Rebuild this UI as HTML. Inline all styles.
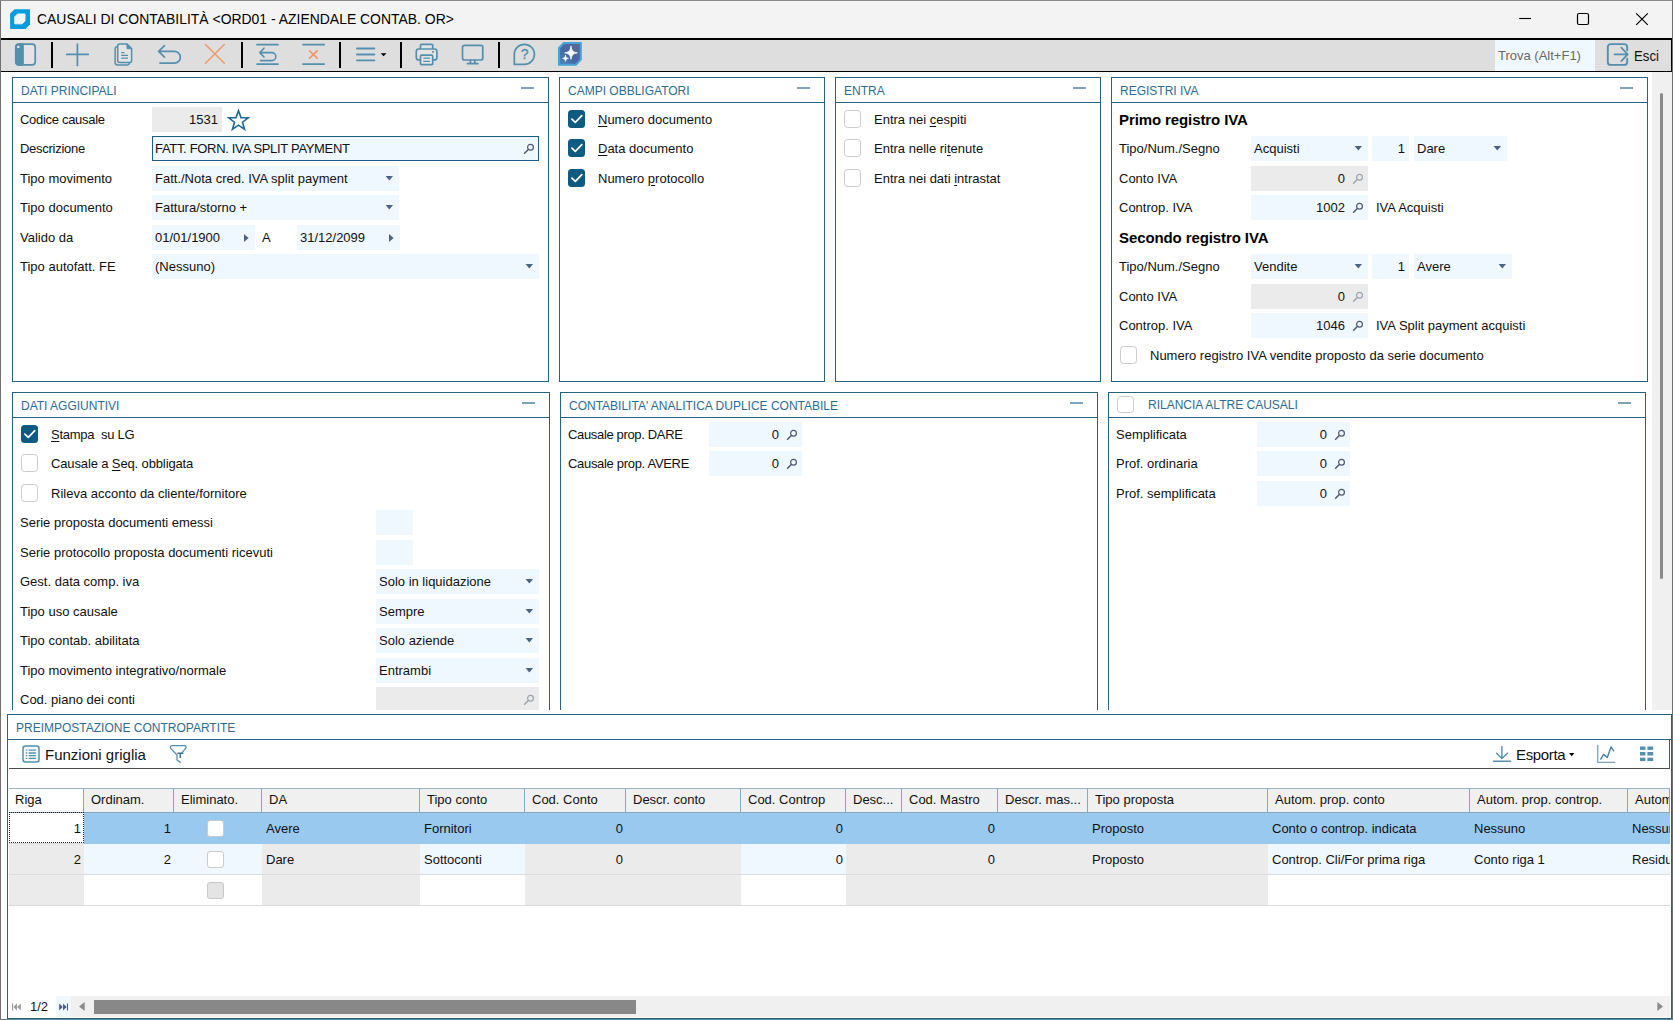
<!DOCTYPE html>
<html lang="it"><head><meta charset="utf-8"><title>Causali di contabilità</title>
<style>
html,body{margin:0;padding:0}
body{width:1673px;height:1020px;overflow:hidden;background:#fff;position:relative;font-family:"Liberation Sans",sans-serif;font-size:13px;color:#101010}
div,span,svg{position:absolute;box-sizing:border-box}
.t{white-space:nowrap;line-height:25px;height:25px}
.pn{border:1px solid #27627f;background:#fff}
.ph{left:0;right:0;top:0;height:25px;border-bottom:1px solid #27627f}
.pt{color:#2c6c92;font-size:12px;line-height:26px;top:0;left:8px;white-space:nowrap}
.mn{width:13px;height:2px;background:#7fa4b9;top:9px}
.f{background:#f0f8ff;height:25px;line-height:25px;white-space:nowrap;overflow:hidden}
.f.d{background:#ebebeb}
.f .v{left:3px;top:0;line-height:25px}
.f .r{top:0;line-height:25px}
.cb{width:17.5px;height:17.5px;border-radius:3.5px;margin:-0.3px 0 0 -0.2px}
.cb.on{background:#0f5a80}
.cb.g{width:17px;height:17px;border-radius:3px;margin:0}
.cb.off{background:#fff;border:1.7px solid #cbcbcb}
.cb.gr{background:#e4e4e4;border:1px solid #c9c9c9}
u{text-decoration-thickness:1px;text-underline-offset:2px}
.b{font-weight:bold;font-size:15px;letter-spacing:-0.1px;white-space:nowrap;line-height:25px;height:25px;color:#000}
.sep{width:2px;background:#000;top:42px;height:26px}
.gh{top:0;height:24px;line-height:21px;white-space:nowrap;overflow:hidden;background:#f0f0f0;border-right:1px solid #86a8bd;padding-left:7px}
.gc{height:31px;line-height:32px;white-space:nowrap;overflow:hidden;border-bottom:1px solid #dcdcdc}
</style></head>
<body>

<div style="left:0;top:0;width:1673px;height:38px;background:#f3f3f3"></div>
<svg style="left:10px;top:9px" width="20" height="20" viewBox="0 0 20 20"><path d="M4.5 0.2 H20 V15.5 L15.5 20 H0.1 V4.5 Z" fill="#069de0"/><path d="M7.6 5 H15 V12 L12.2 14.8 H4.8 V7.8 Z" fill="#f0f8fb" stroke="#f0f8fb" stroke-width="1" stroke-linejoin="round"/></svg>
<div style="left:37px;top:8px;font-size:15px;transform-origin:0 0;transform:scaleX(0.929);line-height:22px;white-space:nowrap;color:#000" id="ttl">CAUSALI DI CONTABILITÀ &lt;ORD01 - AZIENDALE CONTAB. OR&gt;</div>
<svg style="left:1510px;top:8px" width="150" height="22" viewBox="0 0 150 22"><path d="M9.2 10.5 H21" stroke="#000" stroke-width="1.1"/><rect x="67.5" y="5.5" width="11" height="11" rx="1.5" fill="none" stroke="#000" stroke-width="1.2"/><path d="M126.2 5.3 L137.8 16.9 M137.8 5.3 L126.2 16.9" stroke="#000" stroke-width="1.2"/></svg>
<div style="left:0;top:38px;width:1673px;height:34px;background:#000"></div>
<div style="left:1px;top:40px;width:1670px;height:31px;background:#dedede"></div>
<div class="sep" style="left:51px"></div>
<div class="sep" style="left:241px"></div>
<div class="sep" style="left:339px"></div>
<div class="sep" style="left:400px"></div>
<div class="sep" style="left:498px"></div>
<svg style="left:0;top:40px" width="600" height="31" viewBox="0 0 600 31" fill="none" stroke-linecap="round" stroke-linejoin="round">
<defs><linearGradient id="aig" x1="0" y1="1" x2="1" y2="0"><stop offset="0" stop-color="#4a86ba"/><stop offset="0.45" stop-color="#4668a2"/><stop offset="1" stop-color="#5a6a98"/></linearGradient></defs>
<g stroke="#5490ae" stroke-width="1.7">
<rect x="15.8" y="4.1" width="19.4" height="20.8" rx="3.2" fill="#e4e4e4"/><path d="M23 4.1 V24.9 H19 a3.2 3.2 0 0 1 -3.2 -3.2 V7.3 a3.2 3.2 0 0 1 3.2 -3.2 Z" fill="#5490ae"/>
<path d="M77.4 4.2 V25.4 M66.7 14.4 H88.3"/>
<path d="M119.7 4.1 h7.3 l4.6 4.6 v11.8 a2 2 0 0 1 -2 2 h-9.9 a2 2 0 0 1 -2 -2 v-14.4 a2 2 0 0 1 2 -2 Z" stroke-width="1.5" fill="#e4e4e4"/><path d="M127 4.1 v4.6 h4.6 Z" fill="#5490ae" stroke-width="1"/><path d="M117.4 6.6 a2.3 2.3 0 0 0 -2.3 2.3 v13.3 a2.8 2.8 0 0 0 2.8 2.8 h9.3 a2.3 2.3 0 0 0 2.3 -2.3" stroke-width="1.5"/><path d="M121.2 12.6 h3.3 M121.2 15.3 h6.8 M121.2 18.1 h6.8" stroke-width="1.2" stroke-linecap="butt"/>
<path d="M164.5 5.6 L158.6 11.4 L164.5 17.2 M159 11.4 H174.5 a5.85 5.85 0 0 1 0 11.7 H160"/>
<path d="M257 4.7 H278 M257 24.1 H278"/><path d="M264 8.2 L259.8 12.6 L264 17 M260.2 12.6 H271.8 a4 4 0 0 1 0 8 H260.5" stroke-width="1.6"/>
<path d="M303 4.7 H324.2 M303 24.1 H324.2"/>
<path d="M357 8.5 H374.3 M357 14.5 H374.3 M357 20.4 H374.3" stroke-width="1.9"/>
<path d="M420.5 9 V5.3 a1 1 0 0 1 1 -1 h10.2 a1 1 0 0 1 1 1 V9" fill="#e4e4e4"/><rect x="416.3" y="9" width="20.6" height="10.9" rx="2.5" fill="#e4e4e4"/><rect x="420.5" y="15.2" width="12.2" height="9.4" rx="1" fill="#e4e4e4"/><path d="M423.3 18.2 h6.6 M423.3 21.4 h6.6" stroke-width="1.2" stroke-linecap="butt"/>
<rect x="462.5" y="5.4" width="20.3" height="14.6" rx="2"/><path d="M470.4 20 v3.3 M474.8 20 v3.3 M467.4 23.6 H477.9"/>
<path d="M524.4 4.3 a10 10 0 1 1 0 20.1 H514.3 V14.3 a10.05 10.05 0 0 1 10.1 -10 Z"/>
</g>
<circle cx="18.3" cy="6.9" r="1.2" fill="#e6f0f5"/>
<circle cx="433" cy="11.9" r="0.9" fill="#47708a"/>
<text x="524.6" y="19.2" font-family="Liberation Sans, sans-serif" font-size="14" fill="#5490ae" stroke="#5490ae" stroke-width="0.3" text-anchor="middle">?</text>
<g stroke="#f0986a" stroke-width="1.5"><path d="M205.5 4.5 L224.3 23.3 M224.3 4.5 L205.5 23.3"/><path d="M309.6 10.8 L317.2 18.2 M317.2 10.8 L309.6 18.2" stroke-width="1.7"/></g>
<path d="M380.7 13.2 h5.8 l-2.9 3.1 Z" fill="#000"/>
<path d="M563.4 2 H581.8 V19.8 L576.4 25.8 H558 V7.6 Z" fill="#45a3d8"/>
<path d="M564.3 4 H579.8 V19 L575.5 23.8 H560 V8.4 Z" fill="url(#aig)"/>
<path d="M571 6.4 C571.8 10.8 573 12 577.3 12.85 C573 13.7 571.8 14.9 571 19.3 C570.2 14.9 569 13.7 564.7 12.85 C569 12 570.2 10.8 571 6.4 Z M565.5 15.5 C565.9 17.5 566.4 18 568.4 18.4 C566.4 18.8 565.9 19.3 565.5 21.3 C565.1 19.3 564.6 18.8 562.6 18.4 C564.6 18 565.1 17.5 565.5 15.5 Z" fill="#fff" stroke="#fff" stroke-width="0.8" stroke-linejoin="round"/>
</svg>
<div style="left:1495px;top:40px;width:100px;height:31px;background:#f0f8ff"></div>
<div style="left:1498px;top:43px;line-height:25px;color:#686868;font-size:13px;white-space:nowrap" id="trova">Trova (Alt+F1)</div>
<svg style="left:1605px;top:42px" width="26" height="26" viewBox="0 0 26 26" fill="none" stroke="#5490ae" stroke-width="1.9" stroke-linecap="round" stroke-linejoin="round"><path d="M22.2 8.2 V5.1 a3 3 0 0 0 -3 -3 H5.8 a3 3 0 0 0 -3 3 V19.9 a3 3 0 0 0 3 3 H19.2 a3 3 0 0 0 3 -3 V16.8"/><path d="M9.5 12.35 H22 M16.3 5.6 L22.7 12.35 L16.3 19.1" stroke-width="1.7"/></svg>
<div style="left:1634px;top:43px;line-height:25px;font-size:15px;transform-origin:0 0;transform:scaleX(0.88);white-space:nowrap;color:#111" id="esci">Esci</div>
<div style="left:0;top:0;width:1px;height:1020px;background:#707070"></div>
<div style="left:0;top:0;width:1673px;height:1px;background:#8a8a8a"></div>
<div style="left:1671px;top:38px;width:1px;height:34px;background:#000"></div>
<div style="left:1652px;top:72px;width:20px;height:638px;background:#f0f0f0"></div>
<div style="left:1660px;top:93px;width:3px;height:486px;background:#8a8a8a;border-radius:2px"></div>
<div style="left:1672px;top:0;width:1px;height:1020px;background:#707070"></div>
<div class="pn" style="left:12px;top:77px;width:537px;height:305px;"><div class="ph"></div><div class="pt" style="left:8px;top:0px">DATI PRINCIPALI</div><div class="mn" style="left:508px"></div></div>
<div class="t" style="left:20px;top:107px;letter-spacing:-0.3px">Codice causale</div>
<div class="f d" style="left:152px;top:107px;width:70px;"><span class="r" style="right:4px;top:0px">1531</span></div>
<svg style="left:227px;top:108.5px" width="23" height="22" viewBox="0 0 24 23"><path d="M12 1.8 L14.6 9 L22.2 9.2 L16.2 13.8 L18.3 21.2 L12 16.9 L5.7 21.2 L7.8 13.8 L1.8 9.2 L9.4 9 Z" fill="none" stroke="#1d6a93" stroke-width="1.7" stroke-linejoin="miter"/></svg>
<div class="t" style="left:20px;top:136px;letter-spacing:-0.27px">Descrizione</div>
<div class="f" style="left:152px;top:136px;width:387px;border:1px solid #1d5d86;"><span class="v" style="left:2px;top:-1px"><span style="position:static;letter-spacing:-0.32px">FATT. FORN. IVA SPLIT PAYMENT</span></span><svg style="left:370px;top:6px" width="11" height="11" viewBox="0 0 11 11"><circle cx="7.5" cy="4.3" r="2.9" fill="none" stroke="#4b5872" stroke-width="1.2" opacity="1"/><path d="M5.3 6.5 L1.6 10.2" stroke="#4b5872" stroke-width="1.5" stroke-linecap="round" opacity="1"/></svg></div>
<div class="t" style="left:20px;top:166px;">Tipo movimento</div>
<div class="f" style="left:152px;top:166px;width:247px;"><span class="v" style="left:3px;top:0px">Fatt./Nota cred. IVA split payment</span><svg style="left:233px;top:10px" width="8" height="5" viewBox="0 0 8 5"><path d="M0.6 0 H8 L4.3 4.4 Z" fill="#4b6480"/></svg></div>
<div class="t" style="left:20px;top:195px;">Tipo documento</div>
<div class="f" style="left:152px;top:195px;width:247px;"><span class="v" style="left:3px;top:0px">Fattura/storno +</span><svg style="left:233px;top:10px" width="8" height="5" viewBox="0 0 8 5"><path d="M0.6 0 H8 L4.3 4.4 Z" fill="#4b6480"/></svg></div>
<div class="t" style="left:20px;top:225px;">Valido da</div>
<div class="f" style="left:152px;top:225px;width:103px;"><span class="v" style="left:3px;top:0px">01/01/1900</span><svg style="left:92px;top:9px" width="5" height="8" viewBox="0 0 5 8"><path d="M0 0 V8 L4.6 4 Z" fill="#4b6480"/></svg></div>
<div class="t" style="left:262px;top:225px;">A</div>
<div class="f" style="left:297px;top:225px;width:103px;"><span class="v" style="left:3px;top:0px">31/12/2099</span><svg style="left:92px;top:9px" width="5" height="8" viewBox="0 0 5 8"><path d="M0 0 V8 L4.6 4 Z" fill="#4b6480"/></svg></div>
<div class="t" style="left:20px;top:254px;">Tipo autofatt. FE</div>
<div class="f" style="left:152px;top:254px;width:387px;"><span class="v" style="left:3px;top:0px">(Nessuno)</span><svg style="left:373px;top:10px" width="8" height="5" viewBox="0 0 8 5"><path d="M0.6 0 H8 L4.3 4.4 Z" fill="#4b6480"/></svg></div>
<div class="pn" style="left:559px;top:77px;width:266px;height:305px;"><div class="ph"></div><div class="pt" style="left:8px;top:0px">CAMPI OBBLIGATORI</div><div class="mn" style="left:237px"></div></div>
<div class="cb on" style="left:568px;top:110.5px"><svg style="left:0;top:0" width="17.5" height="17.5" viewBox="0 0 17.5 17.5"><path d="M3.9 9.2 L7.3 12.4 L13.8 5.7" fill="none" stroke="#fff" stroke-width="1.7" stroke-linecap="round" stroke-linejoin="round"/></svg></div>
<div class="t" style="left:598px;top:107px;"><u>N</u>umero documento</div>
<div class="cb on" style="left:568px;top:139.5px"><svg style="left:0;top:0" width="17.5" height="17.5" viewBox="0 0 17.5 17.5"><path d="M3.9 9.2 L7.3 12.4 L13.8 5.7" fill="none" stroke="#fff" stroke-width="1.7" stroke-linecap="round" stroke-linejoin="round"/></svg></div>
<div class="t" style="left:598px;top:136px;"><u>D</u>ata documento</div>
<div class="cb on" style="left:568px;top:169.5px"><svg style="left:0;top:0" width="17.5" height="17.5" viewBox="0 0 17.5 17.5"><path d="M3.9 9.2 L7.3 12.4 L13.8 5.7" fill="none" stroke="#fff" stroke-width="1.7" stroke-linecap="round" stroke-linejoin="round"/></svg></div>
<div class="t" style="left:598px;top:166px;">Numero <u>p</u>rotocollo</div>
<div class="pn" style="left:835px;top:77px;width:266px;height:305px;"><div class="ph"></div><div class="pt" style="left:8px;top:0px">ENTRA</div><div class="mn" style="left:237px"></div></div>
<div class="cb off" style="left:844px;top:110.5px"></div>
<div class="t" style="left:874px;top:107px;">Entra nei <u>c</u>espiti</div>
<div class="cb off" style="left:844px;top:139.5px"></div>
<div class="t" style="left:874px;top:136px;">Entra nelle ri<u>t</u>enute</div>
<div class="cb off" style="left:844px;top:169.5px"></div>
<div class="t" style="left:874px;top:166px;">Entra nei dati <u>i</u>ntrastat</div>
<div class="pn" style="left:1111px;top:77px;width:537px;height:305px;"><div class="ph"></div><div class="pt" style="left:8px;top:0px">REGISTRI IVA</div><div class="mn" style="left:508px"></div></div>
<div class="b" style="left:1119px;top:107px">Primo registro IVA</div>
<div class="t" style="left:1119px;top:136px;">Tipo/Num./Segno</div>
<div class="f" style="left:1251px;top:136px;width:117px;"><span class="v" style="left:3px;top:0px">Acquisti</span><svg style="left:103px;top:10px" width="8" height="5" viewBox="0 0 8 5"><path d="M0.6 0 H8 L4.3 4.4 Z" fill="#4b6480"/></svg></div>
<div class="f" style="left:1372px;top:136px;width:37px;"><span class="r" style="right:4px;top:0px">1</span></div>
<div class="f" style="left:1414px;top:136px;width:93px;"><span class="v" style="left:3px;top:0px">Dare</span><svg style="left:79px;top:10px" width="8" height="5" viewBox="0 0 8 5"><path d="M0.6 0 H8 L4.3 4.4 Z" fill="#4b6480"/></svg></div>
<div class="t" style="left:1119px;top:166px;">Conto IVA</div>
<div class="f d" style="left:1251px;top:166px;width:117px;"><span class="r" style="right:23px;top:0px">0</span><svg style="left:101px;top:7px" width="11" height="11" viewBox="0 0 11 11"><circle cx="7.5" cy="4.3" r="2.9" fill="none" stroke="#9aa3ad" stroke-width="1.2" opacity="1"/><path d="M5.3 6.5 L1.6 10.2" stroke="#9aa3ad" stroke-width="1.5" stroke-linecap="round" opacity="1"/></svg></div>
<div class="t" style="left:1119px;top:195px;">Controp. IVA</div>
<div class="f" style="left:1251px;top:195px;width:117px;"><span class="r" style="right:23px;top:0px">1002</span><svg style="left:101px;top:7px" width="11" height="11" viewBox="0 0 11 11"><circle cx="7.5" cy="4.3" r="2.9" fill="none" stroke="#4b5872" stroke-width="1.2" opacity="1"/><path d="M5.3 6.5 L1.6 10.2" stroke="#4b5872" stroke-width="1.5" stroke-linecap="round" opacity="1"/></svg></div>
<div class="t" style="left:1376px;top:195px;">IVA Acquisti</div>
<div class="b" style="left:1119px;top:225px">Secondo registro IVA</div>
<div class="t" style="left:1119px;top:254px;">Tipo/Num./Segno</div>
<div class="f" style="left:1251px;top:254px;width:117px;"><span class="v" style="left:3px;top:0px">Vendite</span><svg style="left:103px;top:10px" width="8" height="5" viewBox="0 0 8 5"><path d="M0.6 0 H8 L4.3 4.4 Z" fill="#4b6480"/></svg></div>
<div class="f" style="left:1372px;top:254px;width:37px;"><span class="r" style="right:4px;top:0px">1</span></div>
<div class="f" style="left:1414px;top:254px;width:98px;"><span class="v" style="left:3px;top:0px">Avere</span><svg style="left:84px;top:10px" width="8" height="5" viewBox="0 0 8 5"><path d="M0.6 0 H8 L4.3 4.4 Z" fill="#4b6480"/></svg></div>
<div class="t" style="left:1119px;top:284px;">Conto IVA</div>
<div class="f d" style="left:1251px;top:284px;width:117px;"><span class="r" style="right:23px;top:0px">0</span><svg style="left:101px;top:7px" width="11" height="11" viewBox="0 0 11 11"><circle cx="7.5" cy="4.3" r="2.9" fill="none" stroke="#9aa3ad" stroke-width="1.2" opacity="1"/><path d="M5.3 6.5 L1.6 10.2" stroke="#9aa3ad" stroke-width="1.5" stroke-linecap="round" opacity="1"/></svg></div>
<div class="t" style="left:1119px;top:313px;">Controp. IVA</div>
<div class="f" style="left:1251px;top:313px;width:117px;"><span class="r" style="right:23px;top:0px">1046</span><svg style="left:101px;top:7px" width="11" height="11" viewBox="0 0 11 11"><circle cx="7.5" cy="4.3" r="2.9" fill="none" stroke="#4b5872" stroke-width="1.2" opacity="1"/><path d="M5.3 6.5 L1.6 10.2" stroke="#4b5872" stroke-width="1.5" stroke-linecap="round" opacity="1"/></svg></div>
<div class="t" style="left:1376px;top:313px;">IVA Split payment acquisti</div>
<div class="cb off" style="left:1120px;top:346.5px"></div>
<div class="t" style="left:1150px;top:343px;">Numero registro IVA vendite proposto da serie documento</div>
<div class="pn" style="left:12px;top:392px;width:538px;height:330px;"><div class="ph"></div><div class="pt" style="left:8px;top:0px">DATI AGGIUNTIVI</div><div class="mn" style="left:509px"></div></div>
<div class="cb on" style="left:21px;top:425.5px"><svg style="left:0;top:0" width="17.5" height="17.5" viewBox="0 0 17.5 17.5"><path d="M3.9 9.2 L7.3 12.4 L13.8 5.7" fill="none" stroke="#fff" stroke-width="1.7" stroke-linecap="round" stroke-linejoin="round"/></svg></div>
<div class="t" style="left:51px;top:422px;letter-spacing:-0.25px"><u>S</u>tampa&nbsp; su LG</div>
<div class="cb off" style="left:21px;top:454.5px"></div>
<div class="t" style="left:51px;top:451px;letter-spacing:-0.13px">Causale a <u>S</u>eq. obbligata</div>
<div class="cb off" style="left:21px;top:484.5px"></div>
<div class="t" style="left:51px;top:481px;">Rileva acconto da cliente/fornitore</div>
<div class="t" style="left:20px;top:510px;">Serie proposta documenti emessi</div>
<div class="f" style="left:376px;top:510px;width:37px;"></div>
<div class="t" style="left:20px;top:540px;">Serie protocollo proposta documenti ricevuti</div>
<div class="f" style="left:376px;top:540px;width:37px;"></div>
<div class="t" style="left:20px;top:569px;">Gest. data comp. iva</div>
<div class="f" style="left:376px;top:569px;width:163px;"><span class="v" style="left:3px;top:0px">Solo in liquidazione</span><svg style="left:149px;top:10px" width="8" height="5" viewBox="0 0 8 5"><path d="M0.6 0 H8 L4.3 4.4 Z" fill="#4b6480"/></svg></div>
<div class="t" style="left:20px;top:599px;">Tipo uso causale</div>
<div class="f" style="left:376px;top:599px;width:163px;"><span class="v" style="left:3px;top:0px">Sempre</span><svg style="left:149px;top:10px" width="8" height="5" viewBox="0 0 8 5"><path d="M0.6 0 H8 L4.3 4.4 Z" fill="#4b6480"/></svg></div>
<div class="t" style="left:20px;top:628px;">Tipo contab. abilitata</div>
<div class="f" style="left:376px;top:628px;width:163px;"><span class="v" style="left:3px;top:0px">Solo aziende</span><svg style="left:149px;top:10px" width="8" height="5" viewBox="0 0 8 5"><path d="M0.6 0 H8 L4.3 4.4 Z" fill="#4b6480"/></svg></div>
<div class="t" style="left:20px;top:658px;">Tipo movimento integrativo/normale</div>
<div class="f" style="left:376px;top:658px;width:163px;"><span class="v" style="left:3px;top:0px">Entrambi</span><svg style="left:149px;top:10px" width="8" height="5" viewBox="0 0 8 5"><path d="M0.6 0 H8 L4.3 4.4 Z" fill="#4b6480"/></svg></div>
<div class="t" style="left:20px;top:687px;">Cod. piano dei conti</div>
<div class="f d" style="left:376px;top:687px;width:163px;"><svg style="left:147px;top:7px" width="11" height="11" viewBox="0 0 11 11"><circle cx="7.5" cy="4.3" r="2.9" fill="none" stroke="#9aa3ad" stroke-width="1.2" opacity="1"/><path d="M5.3 6.5 L1.6 10.2" stroke="#9aa3ad" stroke-width="1.5" stroke-linecap="round" opacity="1"/></svg></div>
<div class="pn" style="left:560px;top:392px;width:538px;height:330px;"><div class="ph"></div><div class="pt" style="left:8px;top:0px">CONTABILITA' ANALITICA DUPLICE CONTABILE</div><div class="mn" style="left:509px"></div></div>
<div class="t" style="left:568px;top:422px;letter-spacing:-0.34px">Causale prop. DARE</div>
<div class="f" style="left:709px;top:422px;width:93px;"><span class="r" style="right:23px;top:0px">0</span><svg style="left:77px;top:7px" width="11" height="11" viewBox="0 0 11 11"><circle cx="7.5" cy="4.3" r="2.9" fill="none" stroke="#4b5872" stroke-width="1.2" opacity="1"/><path d="M5.3 6.5 L1.6 10.2" stroke="#4b5872" stroke-width="1.5" stroke-linecap="round" opacity="1"/></svg></div>
<div class="t" style="left:568px;top:451px;letter-spacing:-0.31px">Causale prop. AVERE</div>
<div class="f" style="left:709px;top:451px;width:93px;"><span class="r" style="right:23px;top:0px">0</span><svg style="left:77px;top:7px" width="11" height="11" viewBox="0 0 11 11"><circle cx="7.5" cy="4.3" r="2.9" fill="none" stroke="#4b5872" stroke-width="1.2" opacity="1"/><path d="M5.3 6.5 L1.6 10.2" stroke="#4b5872" stroke-width="1.5" stroke-linecap="round" opacity="1"/></svg></div>
<div class="pn" style="left:1108px;top:392px;width:538px;height:330px;"><div class="ph"></div><div class="pt" style="left:39px;top:-1px">RILANCIA ALTRE CAUSALI</div><div class="mn" style="left:509px"></div></div>
<div class="cb off" style="left:1117px;top:396px"></div>
<div class="t" style="left:1116px;top:422px;">Semplificata</div>
<div class="f" style="left:1257px;top:422px;width:93px;"><span class="r" style="right:23px;top:0px">0</span><svg style="left:77px;top:7px" width="11" height="11" viewBox="0 0 11 11"><circle cx="7.5" cy="4.3" r="2.9" fill="none" stroke="#4b5872" stroke-width="1.2" opacity="1"/><path d="M5.3 6.5 L1.6 10.2" stroke="#4b5872" stroke-width="1.5" stroke-linecap="round" opacity="1"/></svg></div>
<div class="t" style="left:1116px;top:451px;">Prof. ordinaria</div>
<div class="f" style="left:1257px;top:451px;width:93px;"><span class="r" style="right:23px;top:0px">0</span><svg style="left:77px;top:7px" width="11" height="11" viewBox="0 0 11 11"><circle cx="7.5" cy="4.3" r="2.9" fill="none" stroke="#4b5872" stroke-width="1.2" opacity="1"/><path d="M5.3 6.5 L1.6 10.2" stroke="#4b5872" stroke-width="1.5" stroke-linecap="round" opacity="1"/></svg></div>
<div class="t" style="left:1116px;top:481px;">Prof. semplificata</div>
<div class="f" style="left:1257px;top:481px;width:93px;"><span class="r" style="right:23px;top:0px">0</span><svg style="left:77px;top:7px" width="11" height="11" viewBox="0 0 11 11"><circle cx="7.5" cy="4.3" r="2.9" fill="none" stroke="#4b5872" stroke-width="1.2" opacity="1"/><path d="M5.3 6.5 L1.6 10.2" stroke="#4b5872" stroke-width="1.5" stroke-linecap="round" opacity="1"/></svg></div>
<div style="left:1px;top:710px;width:1671px;height:310px;background:#fff"></div>
<div style="left:7px;top:714px;width:1665px;height:305px;border:1px solid #27627f;background:#fff"></div>
<div style="left:8px;top:739px;width:1663px;height:1px;background:#27627f"></div>
<div class="pt" style="left:16px;top:715px">PREIMPOSTAZIONE CONTROPARTITE</div>
<svg style="left:22px;top:745px" width="18" height="18" viewBox="0 0 18 18" fill="none" stroke="#5490ae"><rect x="1" y="1" width="16" height="16" rx="2.5" stroke-width="1.5" fill="#f2f8fb"/><path d="M3.9 5.2 h1.3 M6.7 5.2 h7.2 M3.9 8 h1.3 M6.7 8 h7.2 M3.9 10.6 h1.3 M6.7 10.6 h7.2 M3.9 13.3 h1.3 M6.7 13.3 h7.2" stroke-width="1.3"/></svg>
<div style="left:45px;top:742px;font-size:15px;line-height:25px;white-space:nowrap;color:#111" id="fg">Funzioni griglia</div>
<svg style="left:169px;top:744px" width="19" height="20" viewBox="0 0 19 20" fill="none" stroke="#5490ae" stroke-width="1.3" stroke-linejoin="round" stroke-linecap="round"><path d="M3 1.7 H15.5 a1.6 1.6 0 0 1 1.2 2.7 L13.3 8.4 M3 1.7 a1.6 1.6 0 0 0 -1.2 2.7 L8 11 V16 L11.3 18.4"/><path d="M8.4 9.2 H14.3 M11.3 9.2 V13.9" stroke="#3f6f90" stroke-width="1.5" stroke-linecap="butt"/></svg>
<div style="left:9px;top:768px;width:1661px;height:1px;background:#4a4a4a"></div>
<div style="left:1669px;top:740px;width:1px;height:29px;background:#555"></div>
<svg style="left:1492px;top:744px" width="20" height="20" viewBox="0 0 20 20" fill="none" stroke="#5490ae" stroke-width="1.4" stroke-linecap="round" stroke-linejoin="round"><path d="M9.9 2.4 V14.4 M4.5 9.2 L9.9 14.6 L15.5 9.2 M1.4 17.3 H18.7"/></svg>
<div style="left:1516px;top:742px;font-size:15px;line-height:25px;letter-spacing:-0.35px;white-space:nowrap;color:#111" id="esp">Esporta</div>
<svg style="left:1569px;top:753px" width="6" height="4" viewBox="0 0 6 4"><path d="M0 0 H5.4 L2.7 3.2 Z" fill="#000"/></svg>
<svg style="left:1596px;top:744px" width="20" height="20" viewBox="0 0 20 20" fill="none" stroke-linecap="round" stroke-linejoin="round"><path d="M1.7 1.3 V18.4 H18.6" stroke="#7fa2b8" stroke-width="1.3"/><path d="M4.8 15.2 L7.6 10.4 L11.3 13.4 L15 3 L17.8 6.8" stroke="#4a809f" stroke-width="1.4"/></svg>
<svg style="left:1637px;top:745px" width="18" height="18" viewBox="0 0 18 18" fill="#5490ae"><rect x="3" y="1.5" width="5.4" height="3.4"/><rect x="10.4" y="1.5" width="5.8" height="3.4"/><rect x="3" y="7" width="5.4" height="3.5"/><rect x="10.4" y="7" width="5.8" height="3.5"/><rect x="3" y="12.7" width="5.4" height="3.4"/><rect x="10.4" y="12.7" width="5.8" height="3.4"/></svg>
<div style="left:9px;top:788px;width:1661px;height:25px;border-top:1px solid #9ab4c6;border-bottom:1px solid #86a8bd;background:#f0f0f0;overflow:hidden">
<div class="gh" style="left:0px;width:75px;background:#fff;padding-left:6px;">Riga</div>
<div class="gh" style="left:75px;width:90px;background:#f0f0f0;">Ordinam.</div>
<div class="gh" style="left:165px;width:88px;background:#f0f0f0;">Eliminato.</div>
<div class="gh" style="left:253px;width:158px;background:#f0f0f0;">DA</div>
<div class="gh" style="left:411px;width:105px;background:#f0f0f0;">Tipo conto</div>
<div class="gh" style="left:516px;width:101px;background:#f0f0f0;">Cod. Conto</div>
<div class="gh" style="left:617px;width:115px;background:#f0f0f0;">Descr. conto</div>
<div class="gh" style="left:732px;width:105px;background:#f0f0f0;">Cod. Controp</div>
<div class="gh" style="left:837px;width:56px;background:#f0f0f0;">Desc...</div>
<div class="gh" style="left:893px;width:96px;background:#f0f0f0;">Cod. Mastro</div>
<div class="gh" style="left:989px;width:90px;background:#f0f0f0;">Descr. mas...</div>
<div class="gh" style="left:1079px;width:180px;background:#f0f0f0;">Tipo proposta</div>
<div class="gh" style="left:1259px;width:202px;background:#f0f0f0;">Autom. prop. conto</div>
<div class="gh" style="left:1461px;width:158px;background:#f0f0f0;">Autom. prop. controp.</div>
<div class="gh" style="left:1619px;width:42px;background:#f0f0f0;">Autom</div>
</div>
<div style="left:9px;top:813px;width:1661px;height:93px;overflow:hidden">
<div class="gc" style="left:0px;top:0px;width:75px;background:#fff;"><span style="right:3px;top:0">1</span></div>
<div class="gc" style="left:75px;top:0px;width:90px;background:#99c9ef;border-bottom-color:#99c9ef;"><span style="right:3px;top:0">1</span></div>
<div class="gc" style="left:165px;top:0px;width:88px;background:#99c9ef;border-bottom-color:#99c9ef;"><div class="cb off g" style="left:33px;top:7px"></div></div>
<div class="gc" style="left:253px;top:0px;width:158px;background:#99c9ef;border-bottom-color:#99c9ef;"><span style="left:4px;top:0">Avere</span></div>
<div class="gc" style="left:411px;top:0px;width:105px;background:#99c9ef;border-bottom-color:#99c9ef;"><span style="left:4px;top:0">Fornitori</span></div>
<div class="gc" style="left:516px;top:0px;width:101px;background:#99c9ef;border-bottom-color:#99c9ef;"><span style="right:3px;top:0">0</span></div>
<div class="gc" style="left:617px;top:0px;width:115px;background:#99c9ef;border-bottom-color:#99c9ef;"></div>
<div class="gc" style="left:732px;top:0px;width:105px;background:#99c9ef;border-bottom-color:#99c9ef;"><span style="right:3px;top:0">0</span></div>
<div class="gc" style="left:837px;top:0px;width:56px;background:#99c9ef;border-bottom-color:#99c9ef;"></div>
<div class="gc" style="left:893px;top:0px;width:96px;background:#99c9ef;border-bottom-color:#99c9ef;"><span style="right:3px;top:0">0</span></div>
<div class="gc" style="left:989px;top:0px;width:90px;background:#99c9ef;border-bottom-color:#99c9ef;"></div>
<div class="gc" style="left:1079px;top:0px;width:180px;background:#99c9ef;border-bottom-color:#99c9ef;"><span style="left:4px;top:0">Proposto</span></div>
<div class="gc" style="left:1259px;top:0px;width:202px;background:#99c9ef;border-bottom-color:#99c9ef;"><span style="left:4px;top:0">Conto o controp. indicata</span></div>
<div class="gc" style="left:1461px;top:0px;width:158px;background:#99c9ef;border-bottom-color:#99c9ef;"><span style="left:4px;top:0">Nessuno</span></div>
<div class="gc" style="left:1619px;top:0px;width:42px;background:#99c9ef;border-bottom-color:#99c9ef;"><span style="left:4px;top:0">Nessuno</span></div>
<div class="gc" style="left:0px;top:31px;width:75px;background:#ebebeb;"><span style="right:3px;top:0">2</span></div>
<div class="gc" style="left:75px;top:31px;width:90px;background:#f0f8ff;"><span style="right:3px;top:0">2</span></div>
<div class="gc" style="left:165px;top:31px;width:88px;background:#f0f8ff;"><div class="cb off g" style="left:33px;top:7px"></div></div>
<div class="gc" style="left:253px;top:31px;width:158px;background:#ebebeb;"><span style="left:4px;top:0">Dare</span></div>
<div class="gc" style="left:411px;top:31px;width:105px;background:#f0f8ff;"><span style="left:4px;top:0">Sottoconti</span></div>
<div class="gc" style="left:516px;top:31px;width:101px;background:#ebebeb;"><span style="right:3px;top:0">0</span></div>
<div class="gc" style="left:617px;top:31px;width:115px;background:#ebebeb;"></div>
<div class="gc" style="left:732px;top:31px;width:105px;background:#f0f8ff;"><span style="right:3px;top:0">0</span></div>
<div class="gc" style="left:837px;top:31px;width:56px;background:#ebebeb;"></div>
<div class="gc" style="left:893px;top:31px;width:96px;background:#ebebeb;"><span style="right:3px;top:0">0</span></div>
<div class="gc" style="left:989px;top:31px;width:90px;background:#ebebeb;"></div>
<div class="gc" style="left:1079px;top:31px;width:180px;background:#ebebeb;"><span style="left:4px;top:0">Proposto</span></div>
<div class="gc" style="left:1259px;top:31px;width:202px;background:#f0f8ff;"><span style="left:4px;top:0">Controp. Cli/For prima riga</span></div>
<div class="gc" style="left:1461px;top:31px;width:158px;background:#f0f8ff;"><span style="left:4px;top:0">Conto riga 1</span></div>
<div class="gc" style="left:1619px;top:31px;width:42px;background:#f0f8ff;"><span style="left:4px;top:0">Residuo</span></div>
<div class="gc" style="left:0px;top:62px;width:75px;background:#ebebeb;"></div>
<div class="gc" style="left:75px;top:62px;width:90px;background:#fff;"></div>
<div class="gc" style="left:165px;top:62px;width:88px;background:#fff;"><div class="cb gr g" style="left:33px;top:7px"></div></div>
<div class="gc" style="left:253px;top:62px;width:158px;background:#ebebeb;"></div>
<div class="gc" style="left:411px;top:62px;width:105px;background:#fff;"></div>
<div class="gc" style="left:516px;top:62px;width:101px;background:#ebebeb;"></div>
<div class="gc" style="left:617px;top:62px;width:115px;background:#ebebeb;"></div>
<div class="gc" style="left:732px;top:62px;width:105px;background:#fff;"></div>
<div class="gc" style="left:837px;top:62px;width:56px;background:#ebebeb;"></div>
<div class="gc" style="left:893px;top:62px;width:96px;background:#ebebeb;"></div>
<div class="gc" style="left:989px;top:62px;width:90px;background:#ebebeb;"></div>
<div class="gc" style="left:1079px;top:62px;width:180px;background:#ebebeb;"></div>
<div class="gc" style="left:1259px;top:62px;width:202px;background:#fff;"></div>
<div class="gc" style="left:1461px;top:62px;width:158px;background:#fff;"></div>
<div class="gc" style="left:1619px;top:62px;width:42px;background:#fff;"></div>
</div>
<div style="left:9px;top:812px;width:75px;height:31px;border:1px dotted #222"></div>
<div style="left:71px;top:996px;width:1599px;height:21px;background:#f0f0f0"></div>
<div style="left:56px;top:996px;width:15px;height:21px;background:#f0f8ff"></div>
<svg style="left:12px;top:1003px" width="9" height="8" viewBox="0 0 10 9" preserveAspectRatio="none"><path d="M0.6 0.5 V8.5" stroke="#9a9a9a" stroke-width="1.2"/><path d="M5.5 0.5 L1.5 4.5 L5.5 8.5 Z M9.8 0.5 L5.8 4.5 L9.8 8.5 Z" fill="#9a9a9a"/></svg>
<div style="left:30px;top:994px;line-height:25px;font-size:13px;white-space:nowrap;color:#111">1/2</div>
<svg style="left:59px;top:1003px" width="9" height="8" viewBox="0 0 10 9" preserveAspectRatio="none"><path d="M9.4 0.5 V8.5" stroke="#4a5a82" stroke-width="1.2"/><path d="M4.5 0.5 L8.5 4.5 L4.5 8.5 Z M0.2 0.5 L4.2 4.5 L0.2 8.5 Z" fill="#4a5a82"/></svg>
<svg style="left:79px;top:1002px" width="6" height="9" viewBox="0 0 6 9"><path d="M5.7 0 V9 L0 4.5 Z" fill="#8a8a8a"/></svg>
<div style="left:94px;top:1000px;width:542px;height:14px;background:#888"></div>
<svg style="left:1657px;top:1002px" width="6" height="9" viewBox="0 0 6 9"><path d="M0.3 0 V9 L6 4.5 Z" fill="#8a8a8a"/></svg>
<div style="left:0;top:1019px;width:1673px;height:1px;background:#707070"></div>
<div style="left:7px;top:1019px;width:1665px;height:1px;background:#5b8aa6"></div>

</body></html>
